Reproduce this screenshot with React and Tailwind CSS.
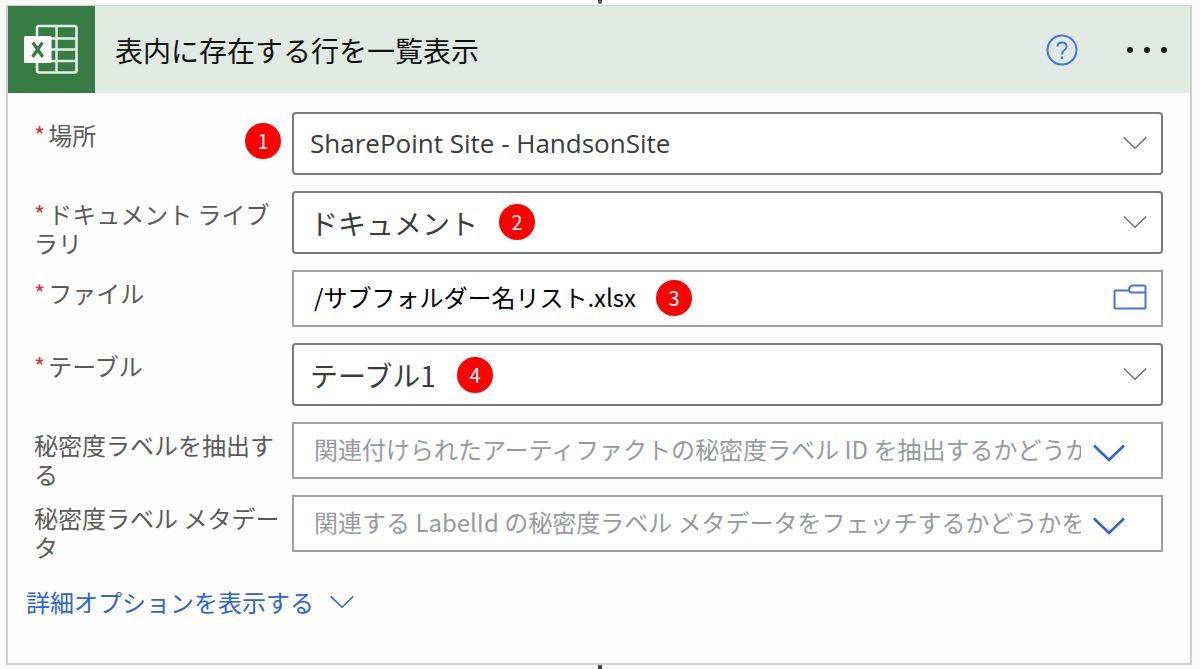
import { useState } from "react"

const Chevron = ({ className, strokeWidth = 2 }) => (
  <svg viewBox="0 0 32 18" className={className} fill="none" stroke="currentColor" strokeWidth={strokeWidth} aria-hidden="true">
    <path d="M1 1.5 L16 16 L31 1.5" />
  </svg>
)

const ExcelIcon = () => (
  <div className="flex w-[87px] shrink-0 items-center justify-center bg-[#387c45]">
    <svg viewBox="0 0 56 52" className="h-[52px] w-14" fill="none" aria-hidden="true">
      <rect x="13" y="2" width="39.5" height="46.5" rx="2" stroke="#e0eee3" strokeWidth="2.6" />
      <path d="M32.5 2V48.5M13.5 14.5H52M13.5 25.5H52M13.5 37H52" stroke="#e0eee3" strokeWidth="2.4" />
      <rect x="0" y="12" width="27.5" height="27" rx="1.5" fill="#fff" />
      <path d="M8.8 18.5L18.8 33M18.5 18.5L8.5 33" stroke="#387c45" strokeWidth="3.2" />
    </svg>
  </div>
)

const FolderIcon = () => (
  <svg viewBox="0 0 34 26" className="h-[26px] w-[34px]" fill="none" stroke="currentColor" strokeWidth="2" strokeLinejoin="round" aria-hidden="true">
    <path d="M16 6.5H2.5Q1.5 6.5 1.5 7.5V23.5Q1.5 24.5 2.5 24.5H31.5Q32.5 24.5 32.5 23.5V3Q32.5 1.5 31 1.5H20Q16 2 16 6Q16.5 8.5 19 8.5H32.5" />
  </svg>
)

const Badge = ({ number, className }) => (
  <span
    className={`pointer-events-none absolute flex size-9 items-center justify-center rounded-full bg-[#fe0000] text-xl text-white ${className}`}
  >
    {number}
  </span>
)

const Row = ({ id, label, required, children }) => (
  <div className="flex">
    <label htmlFor={id} className="w-[258px] shrink-0 pt-2 pr-2 text-2xl leading-[29px] break-all text-[#5a5a5a]">
      {required && <span className="mr-[3px] text-[#d13438]">*</span>}
      {label}
    </label>
    <div className="relative mb-4 min-w-0 flex-1">{children}</div>
  </div>
)

const SelectField = ({ id, value, textClass = "text-[28px]" }) => (
  <div className="relative">
    <select
      id={id}
      defaultValue={value}
      className={`block h-[63px] w-full appearance-none rounded border-2 border-[#7a7a7a] bg-white px-4 text-[#3b3b3b] ${textClass}`}
    >
      <option>{value}</option>
    </select>
    <Chevron className="pointer-events-none absolute top-6 right-4 h-[14px] w-6 text-[#777]" />
  </div>
)

const ComboField = ({ id, placeholder }) => (
  <div className="flex h-[57px] items-center border-2 border-[#a0a0a0] bg-white pr-9 pl-5">
    <input id={id} placeholder={placeholder} className="min-w-0 flex-1 pb-1 text-2xl outline-none placeholder:text-[#969a9e]" />
    <button type="button" aria-label="候補を開く" className="ml-3 pt-1 text-[#2c62dc]">
      <Chevron className="h-[18px] w-8" strokeWidth={2.6} />
    </button>
  </div>
)

export default function App() {
  const [file, setFile] = useState("/サブフォルダー名リスト.xlsx")

  return (
    <div className="relative min-h-screen bg-[#fafafa] px-[6px] pt-[5px] pb-1 font-['Noto_Sans_CJK_JP',sans-serif]">
      {/* Connector ends above and below the card */}
      <span className="absolute top-0 left-1/2 h-1 w-1 -translate-x-1/2 rounded-b bg-[#555]" />
      <span className="absolute bottom-0 left-1/2 h-1 w-1 -translate-x-1/2 bg-[#444]" />

      <div className="mr-[2px] flex min-h-[660px] flex-col border-2 border-t border-[#cfcfcf] bg-[#fefefe]">
        <header className="flex h-[87px] bg-[#e1eae2]">
          <ExcelIcon />
          <h1 className="flex flex-1 items-center pl-5 text-[28px] text-[#111]">表内に存在する行を一覧表示</h1>
          <button type="button" aria-label="ヘルプ" className="text-[#4474e0]">
            <svg viewBox="0 0 32 32" className="size-8" fill="none" stroke="currentColor" strokeWidth="2" aria-hidden="true">
              <circle cx="16" cy="16" r="14.5" />
              <path d="M11.5 12.5Q11.5 8.5 16 8.5Q20.5 8.5 20.5 12.5Q20.5 14.8 18 16.5Q16 18 16 20.5" />
              <path d="M16 22.5V25" strokeWidth="2.4" />
            </svg>
          </button>
          <button type="button" aria-label="メニュー" className="mr-[22px] ml-12 text-[#1a1a1a]">
            <svg viewBox="0 0 42 8" className="h-2 w-[42px]" fill="currentColor" aria-hidden="true">
              <circle cx="4" cy="4" r="3" />
              <circle cx="21" cy="4" r="3" />
              <circle cx="38" cy="4" r="3" />
            </svg>
          </button>
        </header>

        <form className="pt-[19px] pr-[27px] pl-[26px]">
          <Row id="location" label="場所" required>
            <SelectField
              id="location"
              value="SharePoint Site - HandsonSite"
              textClass="text-[26px] font-['Open_Sans','Noto_Sans_CJK_JP',sans-serif]"
            />
            <Badge number={1} className="top-[11px] left-[-47px]" />
          </Row>
          <Row id="library" label="ドキュメント ライブラリ" required>
            <SelectField id="library" value="ドキュメント" />
            <Badge number={2} className="top-[13px] left-[207px]" />
          </Row>
          <Row id="file" label="ファイル" required>
            <div className="flex h-[57px] items-center border-2 border-[#a0a0a0] bg-white pr-[14px] pl-5">
              <input
                id="file"
                value={file}
                onChange={(e) => setFile(e.target.value)}
                className="min-w-0 flex-1 pb-1 text-2xl text-black outline-none"
              />
              <button type="button" aria-label="ファイルの選択" className="pb-1 text-[#4474e0]">
                <FolderIcon />
              </button>
            </div>
            <Badge number={3} className="top-[10px] left-[364px]" />
          </Row>
          <Row id="table" label="テーブル" required>
            <SelectField id="table" value="テーブル1" />
            <Badge number={4} className="top-[14px] left-[165px]" />
          </Row>
          <Row id="extract" label="秘密度ラベルを抽出する">
            <ComboField id="extract" placeholder="関連付けられたアーティファクトの秘密度ラベル ID を抽出するかどうか" />
          </Row>
          <Row id="metadata" label="秘密度ラベル メタデータ">
            <ComboField
              id="metadata"
              placeholder="関連する LabelId の秘密度ラベル メタデータをフェッチするかどうかを決定します"
            />
          </Row>
        </form>

        <button type="button" className="mt-[18px] ml-[18px] flex items-center gap-4 self-start text-2xl text-[#2c62dc]">
          詳細オプションを表示する
          <Chevron className="h-[14px] w-6" />
        </button>
      </div>
    </div>
  )
}
